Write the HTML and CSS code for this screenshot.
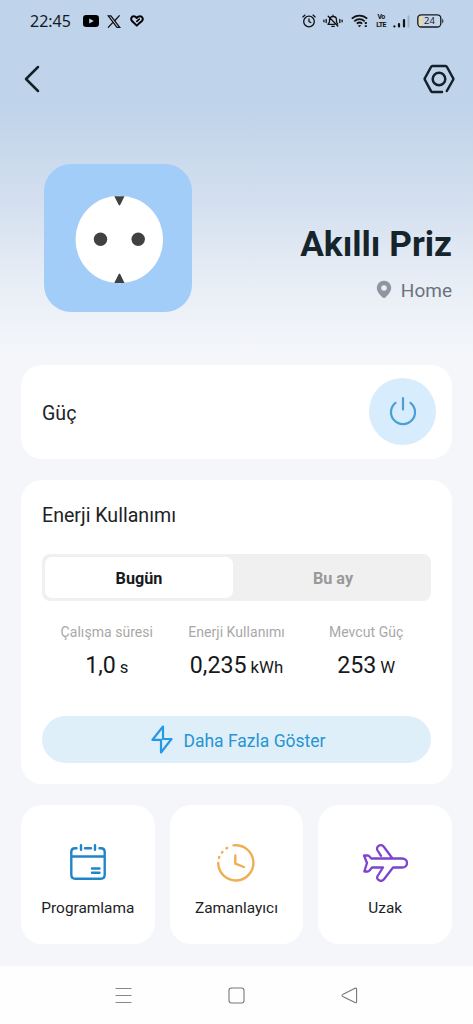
FILE: index.html
```html
<!DOCTYPE html>
<html lang="tr">
<head>
<meta charset="utf-8">
<title>Akıllı Priz</title>
<link rel="stylesheet" href="styles.css">
</head>
<body>
<div class="screen">
  <header class="status">
    <span class="time">22:45</span>
    <svg class="i-video" width="16" height="12" viewBox="0 0 16 12"><rect width="16" height="12" rx="3.2" fill="#000"/><path d="M6.2 3.4v5.2L10.8 6z" fill="#c0d4eb"/></svg>
    <svg class="i-x" width="14" height="13" viewBox="0 0 14 13" fill="none" stroke="#111"><path d="M1.2.8h2.7l8.8 11.5H10z" stroke-width="1.3"/><path d="M12.6.4 7.7 5.8M5.9 7.4 1 12.6" stroke-width="1.3"/></svg>
    <svg class="i-heart" width="14" height="12" viewBox="0 0 14 12" fill="none" stroke="#000" stroke-width="2" stroke-linejoin="round" stroke-linecap="round"><path d="M8.900 8.600 6.800 10.600 2 6C.3 4 1.500 1.300 3.700 1.300c1.300 0 2.200.6 3.100 1.700C7.700 1.800 8.700 1.300 10 1.300c2.200 0 3.800 2.600 2 4.600L8.900 8.600"/><path d="M6.800 6.300 9.300 4.200" stroke-width="1.600"/></svg>
    <span class="spacer"></span>
    <svg class="i-alarm" width="14" height="14" viewBox="0 0 14 14" fill="none" stroke="#111" stroke-width="1.300" stroke-linecap="round"><circle cx="7" cy="7.500" r="5.300"/><path d="M.9 2.900 3 1.100M13.100 2.900 11 1.100M7 4.800v2.900l1.800.8"/></svg>
    <svg class="i-bell" width="20" height="14" viewBox="0 0 20 14" fill="none" stroke="#111" stroke-width="1.300" stroke-linecap="round" stroke-linejoin="round"><path d="M11.500 10.300H5l1.500-2.200V6c0-2 1.400-3.500 3.500-3.500S13.500 4 13.500 6v2l1.200 2M8.800 12.400h2.400M10 1.200v1M5.200 2.200l9.600 9.800"/><path d="M3.200 5.500v3M.9 6.200v1.600M16.800 5.500v3M19.100 6.200v1.600"/></svg>
    <svg class="i-wifi" width="18" height="14" viewBox="0 0 18 14" fill="none" stroke="#111" stroke-width="1.700"><path d="M.8 4.700c4.300-4.200 11-4.200 15.400 0M3.300 7.300c3-2.900 7.400-2.900 10.400 0M5.800 9.700c1.700-1.500 3.700-1.500 5.400 0"/><path d="M8.500 13.300 6.700 11.300h3.600z" fill="#111" stroke="none"/><path d="M14.800 8v1.900M14.800 11.200v1.900" stroke-width="2"/></svg>
    <span class="volte"><span>Vo</span><span>LTE</span></span>
    <svg class="i-signal" width="17" height="13" viewBox="0 0 17 13" stroke-linecap="round" stroke-width="2.200"><path d="M1.400 11.300v.2M6 9v2.500M11 5v6.500" stroke="#111"/><path d="M15.500 1.200v10.500" stroke="#9fb0c6" stroke-width="1.800"/></svg>
    <svg class="i-battery" width="27" height="14" viewBox="0 0 27 14"><rect x=".8" y=".8" width="23" height="12.200" rx="3.500" fill="#c7d7e9" stroke="#151a20" stroke-width="1.300"/><path d="M5.500 2H4Q2 2 2 4v6q0 2 2 2h1.500z" fill="#ecd9a6"/><path d="M25.300 4.500c1.400.8 1.400 4.200 0 5z" fill="#151a20"/><text x="12.500" y="10.400" text-anchor="middle" class="battery-num">24</text></svg>
  </header>
  <nav class="topnav">
    <svg width="16" height="28" viewBox="0 0 16 28" fill="none" stroke="#13212a" stroke-width="2.500" stroke-linecap="round" stroke-linejoin="round"><path d="M14 2 2 14l12 12"/></svg>
    <svg width="32" height="30" viewBox="0 0 32 30" fill="none" stroke="#13212a" stroke-width="2.500" stroke-linejoin="round" stroke-linecap="round"><path d="M19 28H9.500Q8.500 28 8 27.100L2 16Q1.400 15 2 14L8 3Q8.500 2 9.500 2h13Q23.500 2 24 3l6 11q.6 1 0 2l-6.200 11"/><circle cx="16" cy="15" r="6.300"/></svg>
  </nav>
  <section class="hero">
    <svg class="plug" width="148" height="148" viewBox="0 0 148 148"><rect width="148" height="148" rx="27" fill="#a3cdf9"/><circle cx="75.300" cy="75.500" r="43.800" fill="#fff"/><g fill="#404143"><circle cx="56.500" cy="75.300" r="6.700"/><circle cx="94.200" cy="75.300" r="6.700"/><path d="M70.300 32.200h10.200l-4.200 8.500q-.8 1.400-1.700 0zM70.300 119h10.200l-4.200-8.700q-.8-1.400-1.700 0z"/></g></svg>
    <div class="device">
      <h1>Akıllı Priz</h1>
      <p><svg width="16" height="19" viewBox="0 0 16 19"><path fill-rule="evenodd" d="M8 .7A7 7 0 0 0 .8 7.700c0 4 3.300 7.200 6.200 10q1 .8 2 0c2.900-2.800 6.200-6 6.200-10A7 7 0 0 0 8 .7m0 4.500a2.800 2.800 0 1 1 0 5.600 2.800 2.800 0 0 1 0-5.600" fill="#8f969f"/></svg><span>Home</span></p>
    </div>
  </section>
  <main class="cards">
    <section class="card power">
      <h2>Güç</h2>
      <button class="power-btn" aria-label="Güç"><svg width="28" height="30" viewBox="0 0 28 30" fill="none" stroke="#4b9fd3" stroke-width="2.200" stroke-linecap="round"><path d="M14 2v11.500M6.500 6.800a12 12 0 1 0 15 0"/></svg></button>
    </section>
    <section class="card energy">
      <h2>Enerji Kullanımı</h2>
      <div class="tabs"><span class="tab active">Bugün</span><span class="tab">Bu ay</span></div>
      <div class="stats">
        <div class="stat"><span class="label">Çalışma süresi</span><span class="value">1,0<small>s</small></span></div>
        <div class="stat"><span class="label">Enerji Kullanımı</span><span class="value">0,235<small>kWh</small></span></div>
        <div class="stat"><span class="label">Mevcut Güç</span><span class="value">253<small>W</small></span></div>
      </div>
      <button class="more"><svg width="22" height="29" viewBox="0 0 22 29" fill="none" stroke="#2499e6" stroke-width="2.200" stroke-linejoin="round" stroke-linecap="round"><path d="M12 9.500V1.500L1.500 14.800H10V27.500L20.500 14H12V9.500"/></svg><span>Daha Fazla Göster</span></button>
    </section>
    <div class="tiles">
      <div class="card tile"><svg width="36" height="36" viewBox="0 0 36 36" fill="none" stroke="#2085c8" stroke-width="2.400" stroke-linecap="round" stroke-linejoin="round"><path d="M6.500 4.300H5Q1.300 4.300 1.300 8v22.700q0 4 4 4h25.400q4 0 4-4V8q0-3.700-3.700-3.700h-1.500M15 4.300h6M1.300 12.500h33.400M11 1.300v4.400M25 1.300v4.400M22 24.500h7.500M22 28.800h7.500"/></svg><span>Programlama</span></div>
      <div class="card tile"><svg width="40" height="38" viewBox="0 0 40 38" fill="none" stroke="#f0ae54" stroke-width="2.400" stroke-linecap="round" stroke-linejoin="round"><path d="M17.500 1.400A17.600 17.600 0 1 1 2.200 19M3 13.800l.3-.8M6 8.500l.4-.5M10.500 4.300l.6-.4M19.300 11.500v8.100l8.600 3.400"/></svg><span>Zamanlayıcı</span></div>
      <div class="card tile"><svg width="46" height="38" viewBox="0 0 46 38" fill="none" stroke="#7e43cf" stroke-width="2.300" stroke-linecap="round" stroke-linejoin="round"><path d="M19 11.800 15.600 6.500c-2.400-4 3.500-7.200 6.200-3.700L30.500 14.500H40c6.700 0 6.700 9 0 9h-9L22 35.300c-2.700 3.400-8.500.3-6.400-3.300L21 23.500H10L7.500 26.500Q6.700 27.500 5.500 27.500H2.300L5 19 2 11.500h3.500q1.400 0 2 1l1.800 2H30.500"/></svg><span>Uzak</span></div>
    </div>
  </main>
  <footer class="system">
    <svg width="17" height="17" viewBox="0 0 17 17" stroke="#888" stroke-width="1.200"><path d="M.5 1.500h16M.5 8.500h16M.5 15.500h16"/></svg>
    <svg width="17" height="17" viewBox="0 0 17 17"><rect x="1" y="1" width="15" height="15" rx="2.500" fill="none" stroke="#777" stroke-width="1.100"/></svg>
    <svg width="17" height="17" viewBox="0 0 17 17" fill="none" stroke="#777" stroke-width="1.100" stroke-linejoin="round"><path d="M1.700 7.600 14 1.300q1.600-.7 1.600 1v12.400q0 1.600-1.600.9L1.700 9.400q-1.500-.9 0-1.800"/></svg>
  </footer>
</div>
</body>
</html>
```
FILE: styles.css
```css
* { box-sizing: border-box; }
body { margin: 0; font-family: Roboto, "Noto Sans", sans-serif; color: #1d2226; }
h1, h2, p { margin: 0; font-weight: 400; }
button { border: 0; padding: 0; font: inherit; }
svg { display: block; flex: none; }
.screen {
  display: flex; flex-direction: column; width: 473px; height: 1024px; overflow: hidden;
  background: linear-gradient(#bfd3ea 0, #bfd3ea 105px, #d3dfef 200px, #e8eef6 285px, #f4f6fa 350px, #f4f6fa 100%);
}
.status { display: flex; align-items: center; height: 42px; padding: 0 30px; flex: none; }
.time { font: 16px/20px "Noto Sans", sans-serif; color: #15191e; width: 53px; }
.i-x { margin-left: 8px; }
.i-heart { margin-left: 9px; }
.spacer { flex: 1; }
.i-bell { margin-left: 7px; }
.i-wifi { margin-left: 8px; }
.volte { display: flex; flex-direction: column; align-items: center; width: 12px; margin-left: 6px; font-size: 7px; line-height: 8px; font-weight: 700; letter-spacing: -.6px; color: #111; }
.i-signal { margin-left: 6px; }
.i-battery { margin-left: 7px; margin-right: -1px; }
.battery-num { font: 9.500px "Noto Sans", sans-serif; fill: #20262c; }
.topnav { display: flex; justify-content: space-between; align-items: center; height: 74px; padding: 0 18px 0 24px; flex: none; }
.hero { display: flex; justify-content: space-between; height: 249px; padding: 48px 21px 0 44px; flex: none; }
.device { display: flex; flex-direction: column; align-items: flex-end; padding-top: 60px; }
.device h1 { font-size: 35.200px; line-height: 40px; font-weight: 700; color: #16242b; white-space: nowrap; }
.device p { display: flex; align-items: center; gap: 9px; margin-top: 15px; font-size: 19px; line-height: 24px; color: #6c737c; }
.device p svg { margin-bottom: 4px; }
.cards { display: flex; flex-direction: column; gap: 21px; padding: 0 21px; flex: 1; }
.card { background: #fff; border-radius: 21px; }
.power { display: flex; justify-content: space-between; align-items: center; height: 94px; padding: 0 16px 2px 21px; }
.card h2 { font-size: 19.600px; line-height: 24px; }
.power h2 { padding-top: 5px; }
.power-btn { display: grid; place-items: center; width: 67px; height: 67px; border-radius: 50%; background: #d7ecfc; }
.energy { height: 304px; padding: 24px 21px 0; }
.tabs { display: flex; height: 47px; padding: 3px; margin-top: 26px; border-radius: 8px; background: #f0f0f0; }
.tab { flex: 1 1 195px; display: grid; place-items: center; padding: 1px 0 0 5px; border-radius: 7px; font-size: 16.200px; font-weight: 700; color: #999; }
.tab.active { flex: 0 0 188px; padding-left: 0; background: #fff; color: #171a1c; }
.stats { display: grid; grid-template-columns: repeat(3, 1fr); height: 115px; padding-top: 22px; }
.stat { display: flex; flex-direction: column; align-items: center; white-space: nowrap; }
.label { font-size: 14px; line-height: 18px; letter-spacing: .05px; color: #a8a8a8; }
.value { margin-top: 10px; font-size: 23.200px; line-height: 29px; color: #17191b; }
.value small { font-size: 16.800px; margin-left: 4px; }
.more { display: flex; justify-content: center; align-items: center; gap: 10px; width: 100%; height: 47px; padding: 2px 0 0 4px; border-radius: 24px; background: #dfeffa; color: #2894d2; font-size: 17.500px; }
.more svg { margin-bottom: 2px; }
.tiles { display: grid; grid-template-columns: repeat(3, 1fr); gap: 15px; height: 139px; }
.tile { display: flex; flex-direction: column; align-items: center; justify-content: space-between; padding: 39px 0 26px; font-size: 15.400px; line-height: 20px; }
.system { display: flex; justify-content: space-between; height: 58px; padding: 21px 115px 0; flex: none; background: #fefefe; }
```
